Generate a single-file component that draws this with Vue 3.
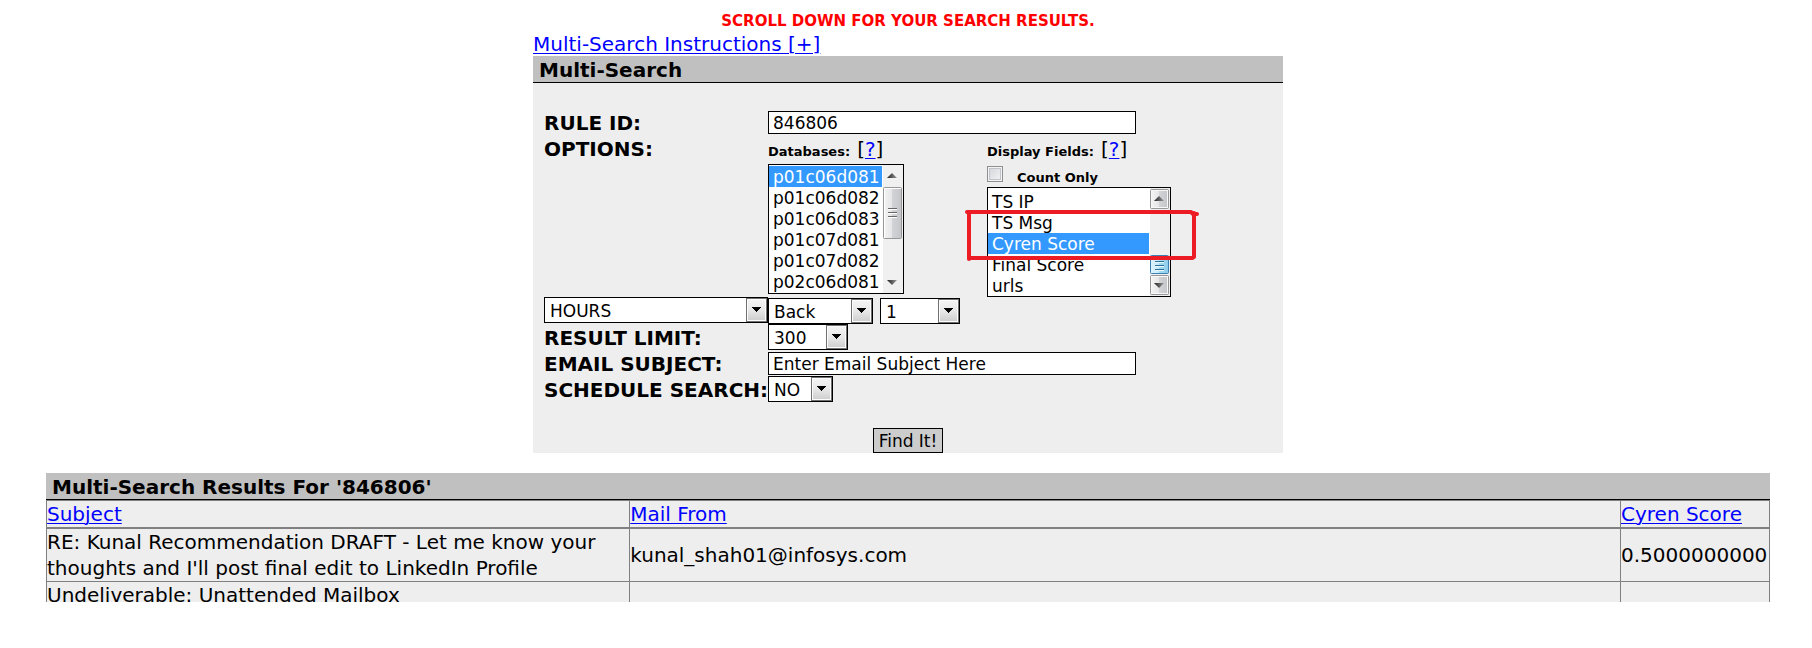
<script setup>
import { ref, onMounted } from 'vue'

const ruleId = ref('846806')
const emailSubject = ref('Enter Email Subject Here')
const databases = ['p01c06d081', 'p01c06d082', 'p01c06d083', 'p01c07d081', 'p01c07d082', 'p02c06d081', 'p02c06d082', 'p02c06d083']
const chosenDatabases = ref(['p01c06d081'])
const fields = ['Subject', 'Mail From', 'Rule ID', 'TS IP', 'TS Msg', 'Cyren Score', 'Final Score', 'urls']
const chosenFields = ref(['Cyren Score'])
const countOnly = ref(false)
const fieldList = ref(null)

const results = [
  { subject: "RE: Kunal Recommendation DRAFT - Let me know your thoughts and I'll post final edit to LinkedIn Profile", from: 'kunal_shah01@infosys.com', score: '0.5000000000' },
  { subject: 'Undeliverable: Unattended Mailbox', from: '', score: '' },
]

onMounted(() => {
  fieldList.value.scrollTop = fieldList.value.scrollHeight
})
</script>

<template>
  <main class="page">
    <svg class="defs" width="0" height="0" aria-hidden="true">
      <defs>
        <linearGradient id="face" x1="0" y1="0" x2="0" y2="1">
          <stop offset="0" stop-color="#f3f3f3" />
          <stop offset="0.5" stop-color="#e8e8e8" />
          <stop offset="1" stop-color="#cfcfcf" />
        </linearGradient>
        <linearGradient id="grey-thumb" x1="0" y1="0" x2="1" y2="0">
          <stop offset="0" stop-color="#f5f5f5" />
          <stop offset="0.45" stop-color="#e6e6e8" />
          <stop offset="0.5" stop-color="#d2d3d6" />
          <stop offset="1" stop-color="#c4c5c9" />
        </linearGradient>
        <linearGradient id="blue-thumb" x1="0" y1="0" x2="1" y2="0">
          <stop offset="0" stop-color="#e1f4fd" />
          <stop offset="0.45" stop-color="#c5e9fa" />
          <stop offset="0.5" stop-color="#a6dcf5" />
          <stop offset="1" stop-color="#8ccbea" />
        </linearGradient>
        <linearGradient id="arrow" x1="0" y1="0" x2="1" y2="0">
          <stop offset="0" stop-color="#222" />
          <stop offset="1" stop-color="#999" />
        </linearGradient>
      </defs>
      <symbol id="drop-button" viewBox="0 0 21 24">
        <rect width="21" height="24" fill="#707070" />
        <rect x="1" y="1" width="19" height="22" fill="#fcfcfc" />
        <rect x="2" y="2" width="17" height="20" fill="url(#face)" />
        <path d="M6 9h9v1h-1v1h-1v1h-1v1h-1v1h-1v-1h-1v-1h-1v-1h-1v-1h-1z" fill="#000" />
      </symbol>
    </svg>

    <p class="notice">SCROLL DOWN FOR YOUR SEARCH RESULTS.</p>

    <section class="search">
      <a class="instructions" href="#">Multi-Search Instructions [+]</a>
      <h1 class="bar">Multi-Search</h1>
      <form class="form" @submit.prevent>
        <div class="fields">
          <label class="name" for="rule">RULE ID:</label>
          <div class="cell"><input id="rule" v-model="ruleId" class="text" type="text" /></div>

          <span class="name">OPTIONS:</span>
          <div class="options">
            <div class="db-group">
              <div class="group-head"><label class="small" for="dbs">Databases:</label><span>[<a href="#">?</a>]</span></div>
              <div class="listbox db-box">
                <select id="dbs" v-model="chosenDatabases" class="list" multiple>
                  <option v-for="d in databases" :key="d">{{ d }}</option>
                </select>
                <svg class="scroll" width="21" height="128" aria-hidden="true">
                  <rect x="1" width="20" height="128" fill="#f0f0f0" />
                  <path d="M5 13 L10 8 L15 13Z" fill="url(#arrow)" />
                  <rect x="1.500" y="22.500" width="18" height="51" rx="1" fill="url(#grey-thumb)" stroke="#979797" />
                  <path d="M2.500 73V23.500H19" fill="none" stroke="#fff" />
                  <path d="M6 43.500h9M6 47.500h9M6 51.500h9" stroke="#666" />
                  <path d="M6 44.500h9M6 48.500h9M6 52.500h9" stroke="#fff" />
                  <path d="M5 115 L10 120 L15 115Z" fill="url(#arrow)" />
                </svg>
              </div>
            </div>

            <div class="field-group">
              <div class="group-head"><label class="small" for="flds">Display Fields:</label><span>[<a href="#">?</a>]</span></div>
              <div class="count">
                <input id="count" v-model="countOnly" class="check" type="checkbox" />
                <label class="small" for="count">Count Only</label>
              </div>
              <div class="listbox field-box">
                <select id="flds" ref="fieldList" v-model="chosenFields" class="list" multiple>
                  <option v-for="f in fields" :key="f">{{ f }}</option>
                </select>
                <svg class="scroll" width="21" height="108" aria-hidden="true">
                  <rect x="1" width="20" height="108" fill="#f0f0f0" />
                  <rect x="1.500" y="1.500" width="18" height="19" rx="1" fill="url(#grey-thumb)" stroke="#979797" />
                  <rect x="2.500" y="2.500" width="16" height="17" fill="none" stroke="#f8f8f8" />
                  <path d="M5 13 L10 8 L15 13Z" fill="url(#arrow)" />
                  <rect x="1.500" y="67.500" width="18" height="18" rx="1" fill="url(#blue-thumb)" stroke="#3c7fb1" />
                  <path d="M6 73.500h9M6 77.500h9M6 81.500h9" stroke="#2f6f94" />
                  <path d="M6 74.500h9M6 78.500h9M6 82.500h9" stroke="#e8f8ff" />
                  <rect x="1.500" y="87.500" width="18" height="19" rx="1" fill="url(#grey-thumb)" stroke="#979797" />
                  <rect x="2.500" y="88.500" width="16" height="17" fill="none" stroke="#f8f8f8" />
                  <path d="M5 95 L10 100 L15 95Z" fill="url(#arrow)" />
                </svg>
                <svg class="marker" width="236" height="54" viewBox="0 0 236 54" aria-hidden="true">
                  <g fill="none" stroke="#ed1c24" stroke-width="4" stroke-linecap="round" stroke-linejoin="round">
                    <path d="M2 3H226L228 5H232" />
                    <path d="M4 3V50" />
                    <path d="M4 49H227" />
                    <path d="M229 4V48L227 49" />
                  </g>
                </svg>
              </div>
            </div>
          </div>

          <span class="drop drop-unit">
            <select aria-label="Time unit"><option>HOURS</option><option>DAYS</option></select>
            <svg width="21" height="24" aria-hidden="true"><use href="#drop-button" /></svg>
          </span>
          <div class="cell range">
            <span class="drop drop-direction">
              <select aria-label="Direction"><option>Back</option><option>Forward</option></select>
              <svg width="21" height="24" aria-hidden="true"><use href="#drop-button" /></svg>
            </span>
            <span class="drop drop-limit">
              <select aria-label="Amount"><option>1</option><option>2</option></select>
              <svg width="21" height="24" aria-hidden="true"><use href="#drop-button" /></svg>
            </span>
          </div>

          <label class="name" for="limit">RESULT LIMIT:</label>
          <div class="cell">
            <span class="drop drop-limit">
              <select id="limit"><option>300</option><option>500</option></select>
              <svg width="21" height="24" aria-hidden="true"><use href="#drop-button" /></svg>
            </span>
          </div>

          <label class="name" for="subject">EMAIL SUBJECT:</label>
          <div class="cell"><input id="subject" v-model="emailSubject" class="text" type="text" /></div>

          <label class="name" for="schedule">SCHEDULE SEARCH:</label>
          <div class="cell">
            <span class="drop drop-schedule">
              <select id="schedule"><option>NO</option><option>YES</option></select>
              <svg width="21" height="24" aria-hidden="true"><use href="#drop-button" /></svg>
            </span>
          </div>
        </div>
        <button class="submit" type="submit">Find It!</button>
      </form>
    </section>

    <section class="results">
      <h2 class="bar">Multi-Search Results For '846806'</h2>
      <table>
        <colgroup><col class="col-subject" /><col /><col class="col-score" /></colgroup>
        <thead>
          <tr>
            <th><a href="#">Subject</a></th>
            <th><a href="#">Mail From</a></th>
            <th><a href="#">Cyren Score</a></th>
          </tr>
        </thead>
        <tbody>
          <tr v-for="r in results" :key="r.subject">
            <td><div>{{ r.subject }}</div></td>
            <td><div>{{ r.from }}</div></td>
            <td><div>{{ r.score }}</div></td>
          </tr>
        </tbody>
      </table>
    </section>
  </main>
</template>

<style>
body {
  margin: 0;
  background: #fff;
}
</style>

<style scoped>
.page {
  padding: 10px 42px 0 46px;
  font: 20px/26px Verdana, "DejaVu Sans", sans-serif;
  color: #000;
}
.defs {
  position: absolute;
}
a {
  color: #00f;
  text-decoration: underline;
  text-decoration-thickness: 1px;
  text-underline-offset: 2px;
}
.notice {
  height: 20px;
  margin: 0;
  color: #f00;
  font-size: 15px;
  font-weight: bold;
  line-height: 22px;
  text-align: center;
}
.search {
  max-width: 750px;
  margin: 0 auto;
}
.instructions {
  display: block;
  width: fit-content;
  height: 26px;
  line-height: 28px;
}
.bar {
  height: 26px;
  margin: 0;
  padding-left: 6px;
  background: #c0c0c0;
  border-bottom: 1px solid #000;
  font-size: 20px;
  line-height: 28px;
  font-weight: bold;
}
.form {
  display: flex;
  flex-direction: column;
  align-items: center;
  padding-top: 26px;
  background: #eee;
}
.fields {
  align-self: stretch;
  display: grid;
  grid-template-columns: 224px 1fr;
  grid-template-rows: 26px 162px 27px 26px 26px 26px;
  padding-left: 11px;
}
.name {
  height: 26px;
  line-height: 28px;
  font-weight: bold;
  white-space: nowrap;
}
.cell {
  display: flex;
  align-items: center;
}
.text {
  box-sizing: border-box;
  width: 368px;
  height: 23px;
  padding: 1px 4px 0;
  border: 1px solid #000;
  background: #fff;
  color: #000;
  font: inherit;
  font-size: 17px;
}
.options {
  display: grid;
  grid-template-columns: 219px 1fr;
}
.group-head {
  display: flex;
  align-items: baseline;
  gap: 7px;
  height: 29px;
  line-height: 28px;
}
.small {
  font-size: 13px;
  font-weight: bold;
}
.listbox {
  position: relative;
  box-sizing: border-box;
  display: flex;
  border: 1px solid #000;
  background: #fff;
}
.db-box {
  width: 136px;
  height: 130px;
}
.field-box {
  width: 184px;
  height: 110px;
}
.list {
  flex: 1;
  min-width: 0;
  height: 100%;
  margin: 0;
  padding: 0;
  border: 0;
  outline: 0;
  border-radius: 0;
  background: #fff;
  color: #000;
  font: inherit;
  font-size: 17px;
  scrollbar-width: none;
}
.db-box .list {
  height: 126px;
  margin-top: 1px;
}
.list option {
  box-sizing: border-box;
  height: 21px;
  padding: 1px 0 0 4px;
  line-height: 21px;
}
.list option:checked {
  background: #39f linear-gradient(#39f, #39f);
  color: #fff;
}
.scroll {
  flex: none;
}
.marker {
  position: absolute;
  left: -23px;
  top: 21px;
  pointer-events: none;
}
.count {
  display: flex;
  gap: 14px;
  height: 23px;
}
.count .small {
  line-height: 27px;
}
.check {
  appearance: none;
  box-sizing: border-box;
  width: 16px;
  height: 16px;
  margin: 2px 0 0;
  border: 1px solid #8e8f8f;
  background: linear-gradient(135deg, #cfd3d9, #f6f6f6);
  box-shadow: inset 0 0 0 1px #f4f4f4, inset 0 0 0 2px #c0c4ca;
}
.drop {
  box-sizing: border-box;
  display: grid;
  height: 26px;
  border: 1px solid #000;
  background: #fff;
}
.drop select {
  grid-area: 1 / 1;
  appearance: none;
  width: 100%;
  height: 24px;
  padding: 0 22px 0 5px;
  border: 0;
  border-radius: 0;
  background: #fff;
  color: #000;
  font: inherit;
  font-size: 17px;
}
.drop svg {
  grid-area: 1 / 1;
  justify-self: end;
  pointer-events: none;
}
.drop-direction {
  width: 105px;
}
.drop-limit {
  width: 80px;
}
.drop-schedule {
  width: 65px;
}
.range {
  gap: 7px;
  align-items: flex-end;
}
.submit {
  height: 25px;
  margin-top: 26px;
  padding: 1px 5px 0;
  border: 1px solid #000;
  border-radius: 0;
  background: #ccc;
  color: #000;
  font: inherit;
  font-size: 17px;
  line-height: 22px;
}
.results {
  margin-top: 20px;
}
table {
  width: 100%;
  table-layout: fixed;
  border-collapse: collapse;
  background: #eee;
}
.col-subject {
  width: 33.85%;
}
.col-score {
  width: 149px;
}
th,
td {
  padding: 0;
  border: 1px solid #808080;
  font-weight: normal;
  text-align: left;
  vertical-align: middle;
}
th {
  border-bottom-width: 2px;
}
tbody tr:last-child td {
  border-bottom: 0;
}
tbody tr:last-child div {
  height: 20px;
  overflow: hidden;
}
</style>
